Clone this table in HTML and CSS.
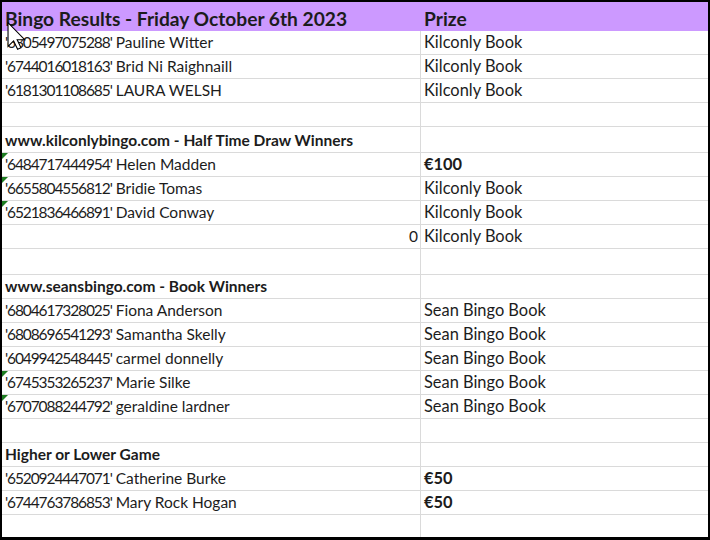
FILE: index.html
```html
<!DOCTYPE html>
<html>
<head>
<meta charset="utf-8">
<link rel="stylesheet" href="styles.css">
</head>
<body>
<div class="sheet">
  <div class="grid">
    <div class="cell head">Bingo Results - Friday October 6th 2023</div>
    <div class="cell head c2">Prize</div>

    <div class="cell"><span class="id">'6805497075288'</span>&nbsp;Pauline Witter</div><div class="cell c2">Kilconly Book</div>
    <div class="cell"><span class="id">'6744016018163'</span>&nbsp;Brid Ni Raighnaill</div><div class="cell c2">Kilconly Book</div>
    <div class="cell"><span class="id">'6181301108685'</span>&nbsp;LAURA WELSH</div><div class="cell c2">Kilconly Book</div>
    <div class="cell"></div><div class="cell c2"></div>

    <div class="cell sec tall">www.kilconlybingo.com - Half Time Draw Winners</div><div class="cell c2 tall"></div>
    <div class="cell flag"><span class="id">'6484717444954'</span>&nbsp;Helen Madden</div><div class="cell c2 b">€100</div>
    <div class="cell flag"><span class="id">'6655804556812'</span>&nbsp;Bridie Tomas</div><div class="cell c2">Kilconly Book</div>
    <div class="cell flag"><span class="id">'6521836466891'</span>&nbsp;David Conway</div><div class="cell c2">Kilconly Book</div>
    <div class="cell num">0</div><div class="cell c2">Kilconly Book</div>
    <div class="cell tall"></div><div class="cell c2 tall"></div>

    <div class="cell sec">www.seansbingo.com - Book Winners</div><div class="cell c2"></div>
    <div class="cell"><span class="id">'6804617328025'</span>&nbsp;Fiona Anderson</div><div class="cell c2">Sean Bingo Book</div>
    <div class="cell"><span class="id">'6808696541293'</span>&nbsp;Samantha Skelly</div><div class="cell c2">Sean Bingo Book</div>
    <div class="cell"><span class="id">'6049942548445'</span>&nbsp;carmel donnelly</div><div class="cell c2">Sean Bingo Book</div>
    <div class="cell flag"><span class="id">'6745353265237'</span>&nbsp;Marie Silke</div><div class="cell c2">Sean Bingo Book</div>
    <div class="cell flag"><span class="id">'6707088244792'</span>&nbsp;geraldine lardner</div><div class="cell c2">Sean Bingo Book</div>
    <div class="cell"></div><div class="cell c2"></div>

    <div class="cell sec">Higher or Lower Game</div><div class="cell c2"></div>
    <div class="cell"><span class="id">'6520924447071'</span>&nbsp;Catherine Burke</div><div class="cell c2 b">€50</div>
    <div class="cell"><span class="id">'6744763786853'</span>&nbsp;Mary Rock Hogan</div><div class="cell c2 b">€50</div>
    <div class="cell"></div><div class="cell c2"></div>
  </div>
  <svg class="cursor" width="19" height="28" viewBox="0 0 12.5 19" xmlns="http://www.w3.org/2000/svg">
    <path d="M0.5 0.5 L0.5 16.5 L4.3 12.8 L7 18.5 L9.3 17.5 L6.7 12 L11.8 12 Z" fill="#fff" stroke="#000" stroke-width="0.75" stroke-linejoin="miter"/>
  </svg>
</div>
</body>
</html>
```

FILE: styles.css
```css
html, body {
  margin: 0;
  padding: 0;
  background: #fff;
}
.sheet {
  position: relative;
  width: 710px;
  height: 540px;
  box-sizing: border-box;
  border: 2px solid #000;
  border-bottom-width: 3px;
  overflow: hidden;
  font-family: Lato, "Liberation Sans", sans-serif;
  color: #1c1c1c;
}
.grid {
  display: grid;
  grid-template-columns: 419px 1fr;
}
.cell {
  position: relative;
  box-sizing: border-box;
  height: 24px;
  border-bottom: 1px solid #dadada;
  border-right: 1px solid #dadada;
  padding: 0 3px 3px 3px;
  display: flex;
  align-items: flex-end;
  font-size: 15.5px;
  line-height: 18px;
  white-space: nowrap;
}
.id {
  letter-spacing: -1.1px;
}
.c2 {
  border-right: none;
  font-size: 16.4px;
}
.tall {
  height: 26px;
}
.head {
  height: 29px;
  background: #cc99ff;
  border: none;
  font-weight: 700;
  font-size: 19.2px;
  padding-bottom: 3px;
}
.sec {
  font-weight: 700;
}
.b {
  font-weight: 700;
}
.num {
  justify-content: flex-end;
  padding-right: 2px;
}
.flag::before {
  content: "";
  position: absolute;
  left: 0;
  top: 0;
  border-top: 6px solid #1e7d22;
  border-right: 6px solid transparent;
}
.cursor {
  position: absolute;
  left: 5px;
  top: 20px;
}
```
